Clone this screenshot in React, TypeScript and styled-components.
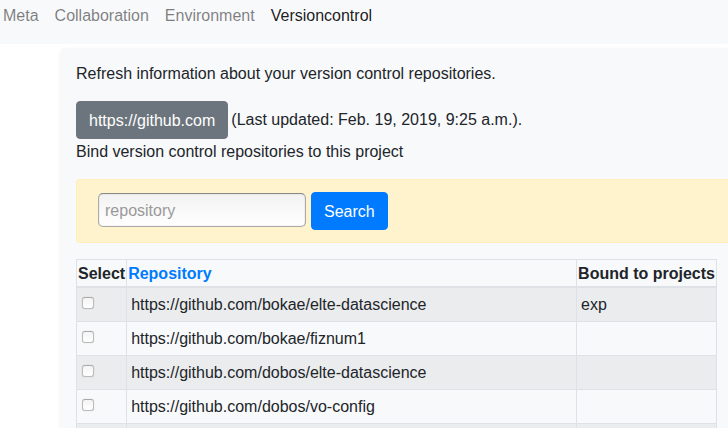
import React from "react";
import styled, { createGlobalStyle } from "styled-components";

const GlobalStyle = createGlobalStyle`
  *, *::before, *::after { box-sizing: border-box; }
  body {
    margin: 0;
    background: #fff;
    color: #212529;
    font: 16px/24px "Liberation Sans", Arial, sans-serif;
  }
`;

const Page = styled.div`
  height: 100vh;
  overflow: hidden;
`;

const NavBar = styled.nav`
  display: flex;
  gap: 16px;
  height: 44px;
  padding: 4px 3px;
  background: #f8f9fb;
`;

const NavLink = styled.a<{ $active?: boolean }>`
  color: ${(p) => (p.$active ? "rgba(0, 0, 0, 0.9)" : "rgba(0, 0, 0, 0.5)")};
  text-decoration: none;
`;

const Card = styled.main`
  margin: 4px 0 0 61px;
  padding: 14px 0 16px 15px;
  background: #f8f9fb;
  border-top-left-radius: 4px;
  box-shadow: 0 2px 4px rgba(0, 0, 0, 0.075);
`;

const Intro = styled.p`
  margin: 0 0 15px;
`;

const UpdateRow = styled.div`
  display: flex;
  align-items: center;
  gap: 3px;
  margin-bottom: 1px;
`;

const Button = styled.button<{ $primary?: boolean }>`
  padding: 7px 12px 5px;
  border: 1px solid ${(p) => (p.$primary ? "#007bff" : "#6c757d")};
  border-radius: 4px;
  background: ${(p) => (p.$primary ? "#007bff" : "#6c757d")};
  color: #fff;
  font: inherit;
  cursor: pointer;
`;

const SearchBar = styled.form`
  display: flex;
  gap: 5px;
  margin-bottom: 16px;
  padding: 12px 0 12px 21px;
  border: 1px solid #ffeeba;
  border-right: 0;
  border-radius: 4px 0 0 4px;
  background: #fff3cd;
`;

const SearchInput = styled.input`
  width: 208px;
  height: 34px;
  margin-top: 1px;
  padding: 2px 6px 0;
  border: 1px solid #aaa;
  border-top-color: #888;
  border-radius: 5px;
  background: linear-gradient(#f2f2f2, #fff);
  box-shadow: inset 0 0 1px rgba(0, 0, 0, 0.4);
  color: #212529;
  font: inherit;
  &::placeholder { color: #999; opacity: 1; }
`;

const Table = styled.table`
  width: calc(100% - 11px);
  border-collapse: collapse;
  border: 1px solid #dee2e6;
`;

const HeadCell = styled.th<{ $fill?: boolean }>`
  width: ${(p) => (p.$fill ? "100%" : "auto")};
  padding: 2px 1px 0;
  border: 1px solid #dee2e6;
  border-bottom-width: 2px;
  text-align: left;
  white-space: nowrap;
  a { color: #007bff; text-decoration: none; }
`;

const Row = styled.tr`
  &:nth-child(odd) { background: rgba(0, 0, 0, 0.05); }
`;

const Cell = styled.td`
  height: 34px;
  padding: 5px 4px 3px;
  border: 1px solid #dee2e6;
`;

const CheckBox = styled.input`
  display: block;
  appearance: none;
  width: 12px;
  height: 12px;
  margin: 0 0 4px 1px;
  border: 1px solid #bbb;
  border-top-color: #aaa;
  border-radius: 3px;
  background: linear-gradient(#f4f4f4, #fff);
  box-shadow: 0 0 1px rgba(0, 0, 0, 0.25);
  &:checked { background: #007bff; }
`;

const sections = ["Meta", "Collaboration", "Environment", "Versioncontrol"];

const repositories = [
  { url: "https://github.com/bokae/elte-datascience", project: "exp" },
  { url: "https://github.com/bokae/fiznum1", project: "" },
  { url: "https://github.com/dobos/elte-datascience", project: "" },
  { url: "https://github.com/dobos/vo-config", project: "" },
  { url: "", project: "" },
];

export default function App() {
  return (
    <Page>
      <GlobalStyle />
      <NavBar>
        {sections.map((name) => (
          <NavLink key={name} href="#" $active={name === "Versioncontrol"}>
            {name}
          </NavLink>
        ))}
      </NavBar>
      <Card>
        <Intro>Refresh information about your version control repositories.</Intro>
        <UpdateRow>
          <Button type="button">https://github.com</Button>
          <span>(Last updated: Feb. 19, 2019, 9:25 a.m.).</span>
        </UpdateRow>
        <Intro>Bind version control repositories to this project</Intro>
        <SearchBar onSubmit={(e) => e.preventDefault()}>
          <SearchInput type="text" placeholder="repository" aria-label="repository" />
          <Button type="submit" $primary>Search</Button>
        </SearchBar>
        <Table>
          <thead>
            <tr>
              <HeadCell>Select</HeadCell>
              <HeadCell $fill><a href="#">Repository</a></HeadCell>
              <HeadCell>Bound to projects</HeadCell>
            </tr>
          </thead>
          <tbody>
            {repositories.map((repo, i) => (
              <Row key={i}>
                <Cell><CheckBox type="checkbox" aria-label={repo.url} /></Cell>
                <Cell>{repo.url}</Cell>
                <Cell>{repo.project}</Cell>
              </Row>
            ))}
          </tbody>
        </Table>
      </Card>
    </Page>
  );
}
